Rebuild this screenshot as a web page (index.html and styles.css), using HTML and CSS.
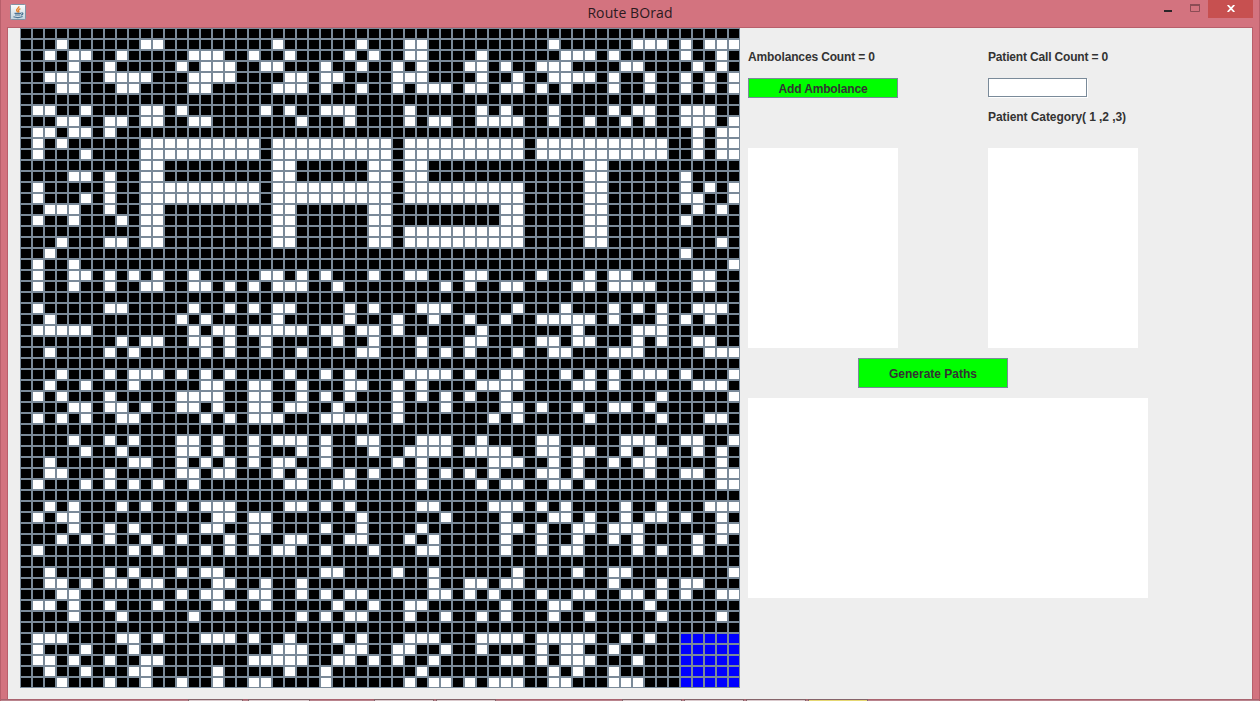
FILE: index.html
```html
<!DOCTYPE html>
<html lang="en">
<head>
<meta charset="utf-8">
<title>Route BOrad</title>
<link rel="stylesheet" href="styles.css">
</head>
<body>
<div class="window">
  <header class="titlebar">
    <svg class="app-icon" width="16" height="16" viewBox="0 0 16 16">
      <defs>
        <linearGradient id="tile" x1="0" y1="0" x2="0" y2="1">
          <stop offset="0" stop-color="#fdfdfd"/><stop offset="1" stop-color="#c3d3dd"/>
        </linearGradient>
      </defs>
      <rect x=".5" y=".5" width="15" height="15" rx="1" fill="url(#tile)" stroke="#8193a4"/>
      <path d="M8.8 2.2C9.6 4 6 4.9 6.6 6.4 6.9 7.3 7.7 7.6 7.6 8.5M10.4 4.7C8.8 5.4 8 6.2 8.7 7.1 9.1 7.7 8.8 8.1 8.4 8.6" fill="none" stroke="#e8832a" stroke-width="1.4"/>
      <path d="M4.5 9.3h6.6M5 11h5.4M11.4 8.9c2-.5 2 1.6-.3 2.2M3.4 12.8c2.6.9 6.8.8 9.2-.3" fill="none" stroke="#4c7494" stroke-width="1.2"/>
    </svg>
    <h1 class="title">Route BOrad</h1>
    <div class="controls">
      <svg class="min" width="8" height="2"><rect width="8" height="2" fill="#2b2528"/></svg>
      <svg class="max" width="10" height="8"><path d="M.5 0V7.5H9.5V0" fill="none" stroke="#8b4c55"/><path d="M0 0H10V2H0z" fill="#8b4c55"/></svg>
      <div class="close"><svg width="8" height="7" viewBox="0 0 8 7"><path d="M.7 0 7.3 7M7.3 0 .7 7" stroke="#fff" stroke-width="1.8"/></svg></div>
    </div>
  </header>
  <main class="content">
    <div class="board" id="board"></div>
    <section class="side">
      <div class="columns">
        <div class="column">
          <div class="label ambulances">Ambolances Count = 0</div>
          <button class="button add">Add Ambolance</button>
          <div class="list"></div>
        </div>
        <div class="column">
          <div class="label calls">Patient Call Count = 0</div>
          <input class="field" type="text" aria-label="Patient Category">
          <div class="label category">Patient Category( 1 ,2 ,3)</div>
          <div class="list"></div>
        </div>
      </div>
      <button class="button generate">Generate Paths</button>
      <div class="output"></div>
    </section>
  </main>
  <footer class="strip">
    <i class="tab first"></i><i class="tab second"></i><i class="tab third"></i><i class="tab"></i><i class="tab fifth"></i><i class="tab"></i><i class="tab"></i><i class="tab active"></i>
  </footer>
</div>
<script src="board.js"></script>
</body>
</html>
```
FILE: styles.css
```css
* { box-sizing: border-box; }
body {
  margin: 0;
  overflow: hidden;
  font-family: "Liberation Sans", Arial, sans-serif;
}
.window {
  width: 1260px;
  height: 701px;
  display: flex;
  flex-direction: column;
  background: #d3737f;
  border-left: 1px solid #b85f6b;
  border-right: 1px solid #b85f6b;
}
.titlebar {
  height: 27px;
  display: grid;
  grid-template-columns: 1fr auto 1fr;
  align-items: start;
}
.app-icon { margin: 4px 0 0 9px; }
.title {
  margin: 2px 0 0;
  font: 400 14px/21px "Open Sans", sans-serif;
  color: #2b1a1e;
  letter-spacing: 0.1px;
}
.controls {
  display: flex;
  justify-content: flex-end;
  padding-right: 6px;
}
.min { margin: 10px 18px 0 0; }
.max { margin: 4px 8px 0 0; }
.close {
  width: 45px;
  height: 18px;
  padding: 5px 0 0 19px;
  background: #c75050;
}
.close svg { display: block; }
.content {
  height: 672px;
  margin: 0 6px;
  padding-left: 12px;
  display: flex;
  align-items: flex-start;
  background: #eee;
  border: 1px solid #b85f6b;
  border-bottom: 0;
}
.board {
  display: grid;
  grid-template-columns: repeat(60, 12px);
  grid-auto-rows: 11px;
}
.cell { background: #000; border: 1px solid #7a8a99; }
.cell.open { background: #fff; }
.cell.base { background: #00f; }
.side {
  width: 400px;
  margin-left: 8px;
  padding-top: 20px;
}
.columns {
  display: grid;
  grid-template-columns: 150px 150px;
  column-gap: 90px;
}
.column {
  height: 300px;
  display: flex;
  flex-direction: column;
}
.label {
  height: 20px;
  font: bold 12px/18px "Liberation Sans", Arial, sans-serif;
  color: #333;
  white-space: nowrap;
}
.ambulances { letter-spacing: -0.14px; }
.calls { letter-spacing: -0.17px; }
.button {
  display: block;
  padding: 2px 0 0;
  border: 1px solid #7a8a99;
  border-radius: 0;
  background: #0f0;
  color: #333;
  font: bold 12px/16px "Liberation Sans", Arial, sans-serif;
}
.add { width: 150px; height: 20px; margin-top: 10px; letter-spacing: -0.15px; }
.field {
  width: 99px;
  height: 19px;
  margin-top: 10px;
  padding: 0 2px;
  border: 1px solid #7a8a99;
  border-radius: 0;
  background: #fff;
  box-shadow: 1px 1px #fff;
}
.category { margin-top: 11px; letter-spacing: -0.08px; }
.list { width: 150px; height: 200px; margin-top: auto; background: #fff; }
.generate { width: 150px; height: 30px; margin: 10px 0 10px 110px; }
.output { height: 200px; background: #fff; }
.strip {
  height: 2px;
  display: flex;
  gap: 2px;
  padding-left: 187px;
  background: #b9848d;
  border-top: 1px solid #a9636f;
}
.tab {
  width: 60px;
  height: 2px;
  margin-top: -1px;
  background: #dac9cc;
  border: 1px solid #85646a;
  border-bottom: 0;
}
.first { width: 55px; }
.second { margin-left: 3px; width: 62px; }
.third { margin-left: 62px; }
.fifth { margin-left: 124px; }
.active { background: #e6d873; }
```
FILE: board.js
```js
// Each row is split into three 20-column blocks; letters a-t name the open cells.
const ROWS = `
//
dkl/bimn/elmnprst
cefiopqt/chjmns/fghjps
ehnpqr/abfilnrs/adefklqs
cdehijkopqr/cdfglmns/befghjmprt
deijop/bcdfilnoprs/abdfjmprt
//
bcfkln/acfghms/aejlmpqr
dehiklop/dhmopst/abehkmpqrt
bcefh//qst
bdklmnopqrst/bcdefghijkmnopqrst/abdefghijklmnqst
bfklmnopqrst/bcdefghijkmnopqrst/abdefghijklmnqst
kl/bcjkmn/hi
efhkl/bcjkmn/hip
bhklmnopqrst/bcdefghijkmnopqrst/abhiprt
bfhklmnopqrst/bcdefghijkmnopqrst/abhipqt
cdehkl/bcjk/abhiqs
beikl/bcjk/abhip
kl/bcjkmnopqrst/abhi
dhikl/bcjkmnopqrst/abhis
c//p
be//t
befhjlo/abdfjmnrs/dhjkqr
behkloprt/bcdgpr/abghjklmqr
//
bhiort/bchjnop/bfjlnqrs
cnp/bhlor/adefghjnpr
bcdefoqrt/abcdfgijls/glmn
iklopr/agjnrs/deghlnqr
chjpr/adijnpr/befjklrst
//
dhjklnpr/cfhmnopr/abfhjlmnpt
cfjpqt/adhilnst/abghjqrs
bdhnopqt/adfhlnpr/ant
efhiknoqt/acdglp/abdgjkm
bdfijprt/abfghilt/bhnrs
//
ehjnoqt/bcdfijnops/deklmpqt
finoqt/dfjmnoprst/adeghkmnqs
cjknprt/bcflnt/abegjlms
cdhnoqr/bdhjnprt/degmpqst
bfhjlo/cdghns/abefhst
//
ceiknpqr/cdfhnot/abdfknrst
bdeqrt/aip/aefhkmnps
ehjpqt/afin/abdghjklst
dfhknrt/cdhimo/adgjlqs
bjlprt/bcfjno/adfglnq
//
chjnpq/fglo/bgjkt
cdfhiklqr/adors/abjnpq
denpqt/adfhioprt/dghklnpst
bcehlqr/agjmn/aefm
eio/dfhimps/aehns
//
bcdijlpqrt/cgimnost/abdefghkm
bfj/bcdhilmps/dfgj
bcehklt/abcdghjlo/abdfghl
cfjkq/cfn/egj
dhknqt/afmoprt/abefjkl`.trim().split("\n");

const board = document.getElementById("board");
ROWS.forEach((row, y) => {
  row.split("/").forEach((open, block) => {
    [..."abcdefghijklmnopqrst"].forEach((letter, i) => {
      const cell = document.createElement("div");
      cell.className = "cell";
      if (open.includes(letter)) cell.classList.add("open");
      if (y >= 55 && block * 20 + i >= 55) cell.classList.add("base");
      board.appendChild(cell);
    });
  });
});
```
